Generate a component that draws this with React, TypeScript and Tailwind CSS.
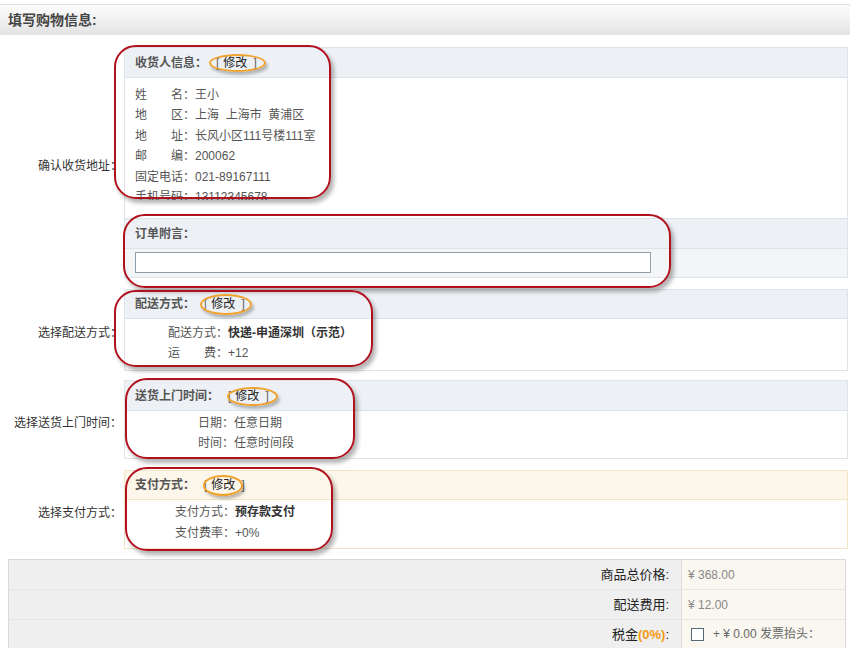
import React from "react";

type Theme = "blue" | "orange";

const Modify = () => (
  <span className="ml-[9px] font-normal">
    <span className="text-[#666]">[</span>
    <span className="ml-[4px] text-[#222]">修改</span>
    <span className="ml-[6px] text-[#666]">]</span>
  </span>
);

const Box = ({
  title,
  theme = "blue",
  headH,
  bodyCls,
  children,
}: {
  title: string;
  theme?: Theme;
  headH: string;
  bodyCls: string;
  children: React.ReactNode;
}) => {
  const orange = theme === "orange";
  return (
    <div
      className={
        orange
          ? "w-[724px] border border-[#f3e4c8]"
          : "w-[724px] border border-[#dfe4ea]"
      }
    >
      <div
        className={
          orange
            ? `${headH} flex items-center border-b border-[#f3e4c8] bg-[#fdf6ea] pl-[10px] font-bold text-[#555]`
            : `${headH} flex items-center border-b border-[#dbe2ea] bg-[#edf1f5] pl-[10px] font-bold text-[#555]`
        }
      >
        {title}
        <Modify />
      </div>
      <div className={bodyCls}>{children}</div>
    </div>
  );
};

const Label = ({ text }: { text: string }) => (
  <div className="flex w-[124px] shrink-0 items-center justify-end pt-[6px] pr-[2px] text-[#333]">
    {text}
  </div>
);

const Ring = ({ cls }: { cls: string }) => (
  <div
    className={`pointer-events-none absolute rounded-[22px] border-2 border-[#b0111d] shadow-[3px_4px_4px_rgba(0,0,0,0.3)] ${cls}`}
  />
);

const Oval = ({ cls }: { cls: string }) => (
  <div
    className={`pointer-events-none absolute rounded-[50%] border-2 border-[#f0a22e] shadow-[2px_3px_3px_rgba(0,0,0,0.25)] ${cls}`}
  />
);

export default function App() {
  const address = [
    ["姓　　名：", "王小"],
    ["地　　区：", "上海  上海市  黄浦区"],
    ["地　　址：", "长风小区111号楼111室"],
    ["邮　　编：", "200062"],
    ["固定电话：", "021-89167111"],
    ["手机号码：", "13112345678"],
  ];

  return (
    <div className="relative h-[648px] w-[850px] overflow-hidden bg-white font-['Liberation_Sans','Noto_Sans_CJK_SC',sans-serif] text-[12px] leading-[20px]">
      {/* title bar */}
      <div className="mt-[4px] flex h-[31px] items-center border-t border-[#e2e2e2] bg-gradient-to-b from-[#fbfbfb] via-[#f1f1f1] to-[#e2e2e2] pl-[8px] text-[14px] font-bold text-[#444]">
        填写购物信息:
      </div>

      {/* address + message */}
      <div className="mt-[12px] flex">
        <Label text="确认收货地址：" />
        <div className="w-[724px] border-x border-[#dfe4ea]">
          <div className="flex h-[31px] items-center border-y border-[#dbe2ea] bg-[#edf1f5] pl-[10px] font-bold text-[#555]">
            收货人信息：
            <Modify />
          </div>
          <div className="h-[140px] bg-white">
            <div className="h-[122px] overflow-hidden pt-[7px] pl-[10px] leading-[20.4px] text-[#555]">
              {address.map(([k, v]) => (
                <div key={k} className="whitespace-pre">
                  {k}
                  {v}
                </div>
              ))}
            </div>
          </div>
          <div className="flex h-[31px] items-center border-y border-[#dbe2ea] bg-[#edf1f5] pl-[10px] font-bold text-[#555]">
            订单附言：
          </div>
          <div className="h-[29px] border-b border-[#dfe4ea] bg-[#f4f5f6] pt-[3px] pl-[10px]">
            <input className="h-[21px] w-[516px] border border-[#8d9fac] bg-white outline-none" />
          </div>
        </div>
      </div>

      {/* delivery */}
      <div className="mt-[11px] flex">
        <Label text="选择配送方式：" />
        <Box title="配送方式：" headH="h-[29px]" bodyCls="h-[51px] pt-[4px] pl-[43px] text-[#555]">
          <div>
            配送方式：<span className="font-bold text-[#333]">快递-申通深圳（示范）</span>
          </div>
          <div>运　　费：+12</div>
        </Box>
      </div>

      {/* time */}
      <div className="mt-[9px] flex">
        <Label text="选择送货上门时间：" />
        <Box title="送货上门时间：" headH="h-[30px]" bodyCls="h-[47px] pt-[2px] pl-[73px] text-[#555]">
          <div>日期：任意日期</div>
          <div>时间：任意时间段</div>
        </Box>
      </div>

      {/* payment */}
      <div className="mt-[11px] flex">
        <Label text="选择支付方式：" />
        <Box
          title="支付方式："
          theme="orange"
          headH="h-[29px]"
          bodyCls="h-[48px] pt-[2px] pl-[50px] leading-[21px] text-[#555]"
        >
          <div>
            支付方式：<span className="font-bold text-[#333]">预存款支付</span>
          </div>
          <div>支付费率：+0%</div>
        </Box>
      </div>

      {/* totals */}
      <div className="mt-[10px] ml-[8px] w-[838px] border border-[#d9d9d9]">
        <div className="flex h-[30px] border-b border-[#e6e6e6]">
          <div className="flex w-[672px] items-center justify-end bg-[#efefef] pr-[12px] text-[13px] text-[#222]">
            商品总价格:
          </div>
          <div className="flex flex-1 items-center border-l border-[#dedede] bg-[#faf7f0] pl-[6px] text-[#888]">
            ¥ 368.00
          </div>
        </div>
        <div className="flex h-[30px] border-b border-[#e6e6e6]">
          <div className="flex w-[672px] items-center justify-end bg-[#efefef] pr-[12px] text-[13px] text-[#222]">
            配送费用:
          </div>
          <div className="flex flex-1 items-center border-l border-[#dedede] bg-[#faf7f0] pl-[6px] text-[#888]">
            ¥ 12.00
          </div>
        </div>
        <div className="flex h-[60px]">
          <div className="flex h-[30px] w-[672px] items-center justify-end self-start bg-[#efefef] pr-[12px] text-[13px] text-[#222]">
            税金<span className="font-bold text-[#f39a12]">(0%)</span>:
          </div>
          <div className="flex-1 border-l border-[#dedede] bg-[#faf7f0]">
            <div className="flex h-[28px] items-center pl-[9px] text-[#666]">
              <span className="h-[13px] w-[13px] border border-[#55697a] bg-white" />
              <span className="ml-[9px]">+ ¥ 0.00 发票抬头：</span>
            </div>
            <input className="ml-[5px] h-[22px] w-[151px] border border-[#9aa9b5] bg-white outline-none" />
          </div>
        </div>
      </div>

      {/* annotations */}
      <Ring cls="left-[114px] top-[45px] h-[154px] w-[217px]" />
      <Ring cls="left-[123px] top-[214px] h-[74px] w-[548px]" />
      <Ring cls="left-[114px] top-[290px] h-[77px] w-[259px]" />
      <Ring cls="left-[125px] top-[378px] h-[81px] w-[230px]" />
      <Ring cls="left-[125px] top-[467px] h-[84px] w-[208px]" />
      <Oval cls="left-[209px] top-[54px] h-[18px] w-[57px]" />
      <Oval cls="left-[200px] top-[294px] h-[21px] w-[52px]" />
      <Oval cls="left-[227px] top-[387px] h-[19px] w-[51px]" />
      <Oval cls="left-[203px] top-[475px] h-[21px] w-[40px]" />
    </div>
  );
}
